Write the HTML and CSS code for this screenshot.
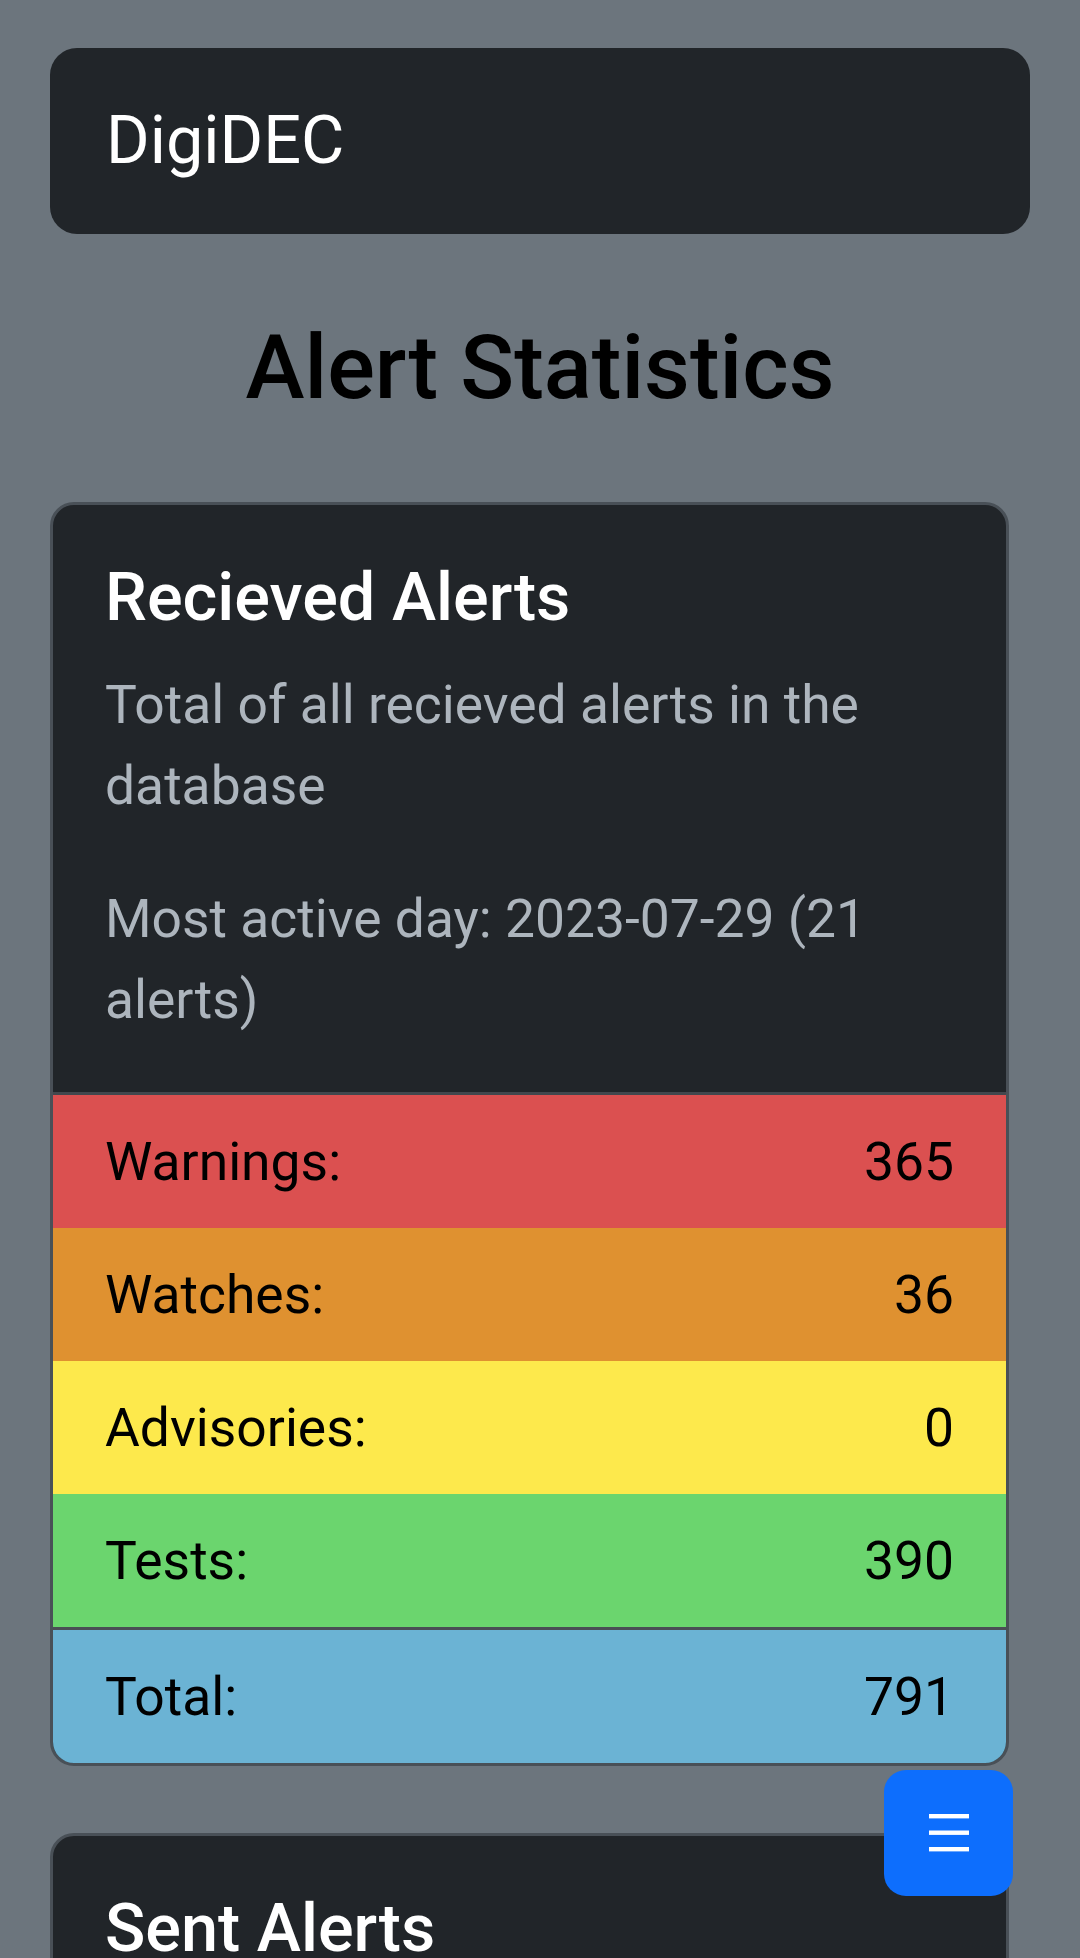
FILE: index.html
```html
<!DOCTYPE html>
<html lang="en">
<head>
<meta charset="utf-8">
<title>DigiDEC - Alert Statistics</title>
<link rel="stylesheet" href="styles.css">
</head>
<body>
<div class="page">
  <nav class="navbar"><span class="brand">DigiDEC</span></nav>
  <h1 class="title">Alert Statistics</h1>

  <div class="card">
    <div class="card-body">
      <h5 class="card-title">Recieved Alerts</h5>
      <p class="card-text">Total of all recieved alerts in the database</p>
      <p class="card-text">Most active day: 2023-07-29 (21 alerts)</p>
    </div>
    <ul class="stats">
      <li class="stat stat-warn"><span>Warnings:</span><span>365</span></li>
      <li class="stat stat-watch"><span>Watches:</span><span>36</span></li>
      <li class="stat stat-adv"><span>Advisories:</span><span>0</span></li>
      <li class="stat stat-test"><span>Tests:</span><span>390</span></li>
      <li class="stat stat-total"><span>Total:</span><span>791</span></li>
    </ul>
  </div>

  <div class="card">
    <div class="card-body">
      <h5 class="card-title">Sent Alerts</h5>
      <p class="card-text">Total of all sent alerts in the database</p>
    </div>
  </div>
</div>

<button class="fab" type="button" aria-label="Menu">
  <svg width="40" height="38" viewBox="0 0 40 38" aria-hidden="true">
    <rect x="0" y="0" width="40" height="4.4" fill="#ffffff"/>
    <rect x="0" y="16.5" width="40" height="4.4" fill="#ffffff"/>
    <rect x="0" y="33" width="40" height="4.4" fill="#ffffff"/>
  </svg>
</button>
</body>
</html>
```

FILE: styles.css
```css
html, body {
  margin: 0;
  padding: 0;
}

body {
  background: #6c757d;
  font-family: Roboto, "Noto Sans", "Liberation Sans", sans-serif;
  color: #000;
  min-height: 1958px;
}

.page {
  padding: 48px 50px 0 50px;
}

.navbar {
  height: 186px;
  background: #212529;
  border-radius: 27px;
  display: flex;
  align-items: center;
  padding-left: 56px;
}

.brand {
  color: #ffffff;
  font-size: 66.6px;
  line-height: 1.5;
  font-weight: 400;
}

.title {
  margin: 80px 0 80px 0;
  font-size: 89px;
  line-height: 108px;
  font-weight: 500;
  text-align: center;
  color: #000;
}

.card {
  margin-right: 21px;
  margin-bottom: 67px;
  background: #212529;
  border: 3px solid #495057;
  border-radius: 24px;
  overflow: hidden;
}

.card-body {
  padding: 52px;
}

.card-title {
  margin: 0 0 26px 0;
  font-size: 66.6px;
  line-height: 81px;
  font-weight: 500;
  color: #ffffff;
}

.card-text {
  margin: 0 0 52px 0;
  font-size: 53.4px;
  line-height: 81px;
  color: #adb5bd;
}

.card-text:last-child {
  margin-bottom: 0;
}

.stats {
  list-style: none;
  margin: 0;
  padding: 0;
  border-top: 3px solid #43474d;
}

.stat {
  display: flex;
  justify-content: space-between;
  padding: 26px 52px;
  font-size: 53.4px;
  line-height: 81px;
  color: #000;
}

.stat-warn { background: #db5050; }
.stat-watch { background: #df9130; }
.stat-adv { background: #fde94c; }
.stat-test { background: #6bd56e; }
.stat-total {
  background: #6bb3d4;
  border-top: 3px solid #4a4e55;
}

.fab {
  position: fixed;
  right: 67px;
  bottom: 62px;
  width: 129px;
  height: 126px;
  border: none;
  border-radius: 22px;
  background: #0d6efd;
  display: flex;
  align-items: center;
  justify-content: center;
  padding: 0;
}

.fab svg {
  display: block;
}
```
